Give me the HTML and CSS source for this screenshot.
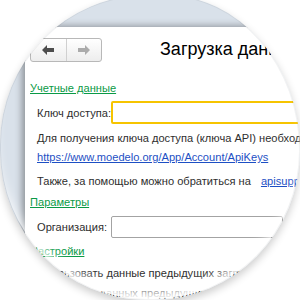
FILE: index.html
```html
<!DOCTYPE html>
<html lang="ru">
<head>
    <meta charset="UTF-8">
    <title>Загрузка данных</title>
    <link rel="stylesheet" href="styles.css">
</head>
<body>
<div class="lens">
    <div class="window">
        <div class="head">
            <div class="nav">
                <span class="nav-btn">
                    <svg width="12" height="10" viewBox="0 0 12 10"><path d="M0 5 L5 0 L5 3 L12 3 L12 7 L5 7 L5 10 Z" fill="#4d4d4d"/></svg>
                </span>
                <span class="nav-btn">
                    <svg width="12" height="10" viewBox="0 0 12 10"><path d="M12 5 L7 0 L7 3 L0 3 L0 7 L7 7 L7 10 Z" fill="#ababab"/></svg>
                </span>
            </div>
            <div class="title">Загрузка данных из сервиса</div>
        </div>

        <a class="group g-first">Учетные данные</a>
        <div class="field f-key">
            <span class="label">Ключ доступа:</span>
            <span class="input active"></span>
        </div>
        <div class="line l-info">Для получения ключа доступа (ключа API) необходимо перейти по ссылке</div>
        <div class="line l-url"><a class="link">https://www.moedelo.org/App/Account/ApiKeys</a></div>
        <div class="line l-help">Также, за помощью можно обратиться на <a class="link mail">apisupport@moedelo.org</a></div>

        <a class="group">Параметры</a>
        <div class="field f-org">
            <span class="label">Организация:</span>
            <span class="input"></span>
        </div>

        <a class="group g-set">Настройки</a>
        <div class="line l-opt">Использовать данные предыдущих загрузок</div>
        <div class="line l-opt2">Без загрузки данных предыдущих периодов</div>
    </div>
</div>
</body>
</html>
```
FILE: styles.css
```css
html, body {
    margin: 0;
    width: 300px;
    height: 300px;
    overflow: hidden;
    background: #fff;
}
.lens {
    position: relative;
    margin-top: -5px;
    width: 300px;
    height: 305px;
    border-radius: 50% 46% 50% 50% / 50% 52% 50% 50%;
    overflow: hidden;
    background: #d9e1ea;
    box-shadow: 0 4px 8px rgba(0, 0, 0, .2);
    font-family: "Liberation Sans", Arial, sans-serif;
    font-size: 11.1px;
    color: #2e2e2e;
}
.lens::after {
    content: "";
    position: absolute;
    inset: 0;
    border-radius: inherit;
    border: 1px solid rgba(0, 0, 0, .05);
    box-shadow: inset 0 -14px 12px -6px #fff;
    pointer-events: none;
}
.window {
    margin: 32px 0 0 25px;
    width: 420px;
    height: 300px;
    padding: 10px 0 0 5px;
    box-sizing: border-box;
    background: #fff;
    box-shadow: -3px -1px 7px rgba(0, 0, 0, .35);
}
.head {
    display: flex;
    align-items: center;
    height: 25px;
}
.nav {
    display: flex;
    width: 72px;
    height: 24px;
    box-sizing: border-box;
    border: 1px solid #b8b8b8;
    border-radius: 3px;
    background: linear-gradient(#fff, #ededed);
}
.nav-btn {
    flex: 1;
    display: flex;
    align-items: center;
    justify-content: center;
}
.nav-btn + .nav-btn {
    border-left: 1px solid #d0d0d0;
}
.title {
    margin-left: 58px;
    font-size: 18px;
    color: #000;
    white-space: nowrap;
}
.group {
    display: block;
    width: max-content;
    line-height: 18px;
    margin-top: 3px;
    color: #0a9a46;
    text-decoration: underline;
}
.g-first {
    margin-top: 17px;
}
.g-set {
    margin-top: 4px;
}
.field {
    display: flex;
    align-items: center;
    gap: 1px;
    margin-left: 7px;
}
.f-key {
    height: 23px;
    margin-top: 4px;
}
.f-org {
    height: 22px;
    margin-top: 5px;
}
.label {
    width: 73px;
    white-space: nowrap;
}
.input {
    align-self: stretch;
    width: 172px;
    box-sizing: border-box;
    border: 1px solid #a3a3a3;
    border-radius: 2px;
}
.input.active {
    width: 300px;
    border: 2px solid #f6c400;
}
.line {
    margin-left: 7px;
    line-height: 18px;
    white-space: nowrap;
}
.l-info {
    margin-top: 5px;
}
.l-url {
    margin-top: 1px;
}
.l-help {
    margin-top: 6px;
}
.l-opt {
    margin-left: 2px;
    margin-top: 4px;
}
.l-opt2 {
    margin-left: 2px;
    margin-top: 2px;
}
.link {
    color: #1d4fc4;
    text-decoration: underline;
}
.mail {
    margin-left: 7px;
}
```
